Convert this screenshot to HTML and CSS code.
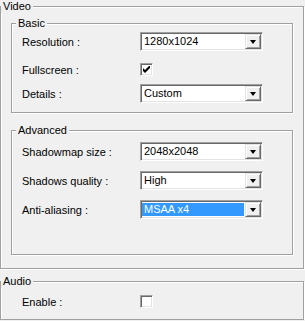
FILE: index.html
```html
<!DOCTYPE html>
<html lang="en">

<head>
  <meta charset="UTF-8">
  <meta name="viewport" content="width=device-width, initial-scale=1.0">
  <title>Options</title>

  <link rel="stylesheet" href="styles.css">

</head>

<body>
  <div class="group video">
    <span class="group-title">Video</span>
    <div class="group-body">

      <div class="group basic">
        <span class="group-title">Basic</span>
        <div class="group-body">
          <div class="row">
            <span class="label">Resolution :</span>
            <div class="combo"><span class="combo-text">1280x1024</span><span class="combo-btn"></span></div>
          </div>
          <div class="row check-row">
            <span class="label">Fullscreen :</span>
            <span class="checkbox">
              <svg width="7" height="7" viewBox="0 0 7 7"><polygon points="0,2 2,4 7,-1 7,2 2,7 0,5" fill="#000"/></svg>
            </span>
          </div>
          <div class="row">
            <span class="label">Details :</span>
            <div class="combo"><span class="combo-text">Custom</span><span class="combo-btn"></span></div>
          </div>
        </div>
      </div>

      <div class="group advanced">
        <span class="group-title">Advanced</span>
        <div class="group-body">
          <div class="row">
            <span class="label">Shadowmap size :</span>
            <div class="combo"><span class="combo-text">2048x2048</span><span class="combo-btn"></span></div>
          </div>
          <div class="row">
            <span class="label">Shadows quality :</span>
            <div class="combo"><span class="combo-text">High</span><span class="combo-btn"></span></div>
          </div>
          <div class="row">
            <span class="label">Anti-aliasing :</span>
            <div class="combo focused"><span class="combo-text">MSAA x4</span><span class="combo-btn"></span></div>
          </div>
        </div>
      </div>

    </div>
  </div>

  <div class="group audio">
    <span class="group-title">Audio</span>
    <div class="group-body">
      <div class="row check-row">
        <span class="label">Enable :</span>
        <span class="checkbox"></span>
      </div>
    </div>
  </div>
</body>

</html>
```

FILE: styles.css
```css
body {
  margin: 0;
  background: #f0f0f0;
  font-family: "Liberation Sans", Arial, sans-serif;
  font-size: 11px;
  color: #000;
}

.group {
  border: 1px solid #a0a0a0;
  box-shadow: 1px 1px 0 #fff, inset 1px 1px 0 #fff;
}

.group-title {
  display: table;
  margin: -7px 0 0 0;
  padding: 0 2px;
  line-height: 13px;
  background: #f0f0f0;
}

/* outer boxes */
.video {
  width: 304px;
  box-sizing: border-box;
  margin-top: 6px;
}

.video > .group-body {
  padding: 10px 10px 13px 10px;
}

.audio {
  width: 304px;
  box-sizing: border-box;
  margin-top: 12px;
}

.audio > .group-body {
  padding: 7px 0 11px 21px;
}

/* inner boxes */
.basic > .group-title,
.advanced > .group-title {
  margin-left: 4px;
}

.basic > .group-body {
  padding: 2px 0 9px 10px;
}

.advanced {
  margin-top: 17px;
}

.advanced > .group-body {
  padding: 5px 0 35px 10px;
  display: flex;
  flex-direction: column;
  gap: 10px;
}

.row {
  display: flex;
  align-items: center;
  height: 19px;
}

.basic .check-row {
  margin: 12px 0 8px;
}

.check-row {
  height: 13px;
}

.label {
  width: 118px;
}

/* combobox */
.combo {
  display: flex;
  width: 123px;
  height: 19px;
  box-sizing: border-box;
  border: 1px solid;
  border-color: #a0a0a0 #fff #fff #a0a0a0;
  box-shadow: inset 1px 1px 0 #696969, inset -1px -1px 0 #e3e3e3;
  background: #fff;
  padding: 1px;
}

.combo-text {
  flex: 1;
  padding-left: 2px;
  line-height: 15px;
}

.focused .combo-text {
  margin: 1px 1px 1px 0;
  padding-left: 2px;
  line-height: 13px;
  background: #3399ff;
  color: #fff;
}

.combo-btn {
  width: 16px;
  height: 15px;
  box-sizing: border-box;
  border: 1px solid;
  border-color: #e3e3e3 #696969 #696969 #e3e3e3;
  box-shadow: inset 1px 1px 0 #fff, inset -1px -1px 0 #a0a0a0;
  background: #f0f0f0;
  display: flex;
  align-items: center;
  justify-content: center;
}

.combo-btn::after {
  content: '';
  border-left: 3.5px solid transparent;
  border-right: 3.5px solid transparent;
  border-top: 4px solid #000;
  margin-top: 1px;
}

/* checkbox */
.checkbox {
  width: 13px;
  height: 13px;
  box-sizing: border-box;
  border: 1px solid;
  border-color: #a0a0a0 #fff #fff #a0a0a0;
  box-shadow: inset 1px 1px 0 #696969, inset -1px -1px 0 #e3e3e3;
  background: #fff;
  display: flex;
  align-items: center;
  justify-content: center;
}
```
